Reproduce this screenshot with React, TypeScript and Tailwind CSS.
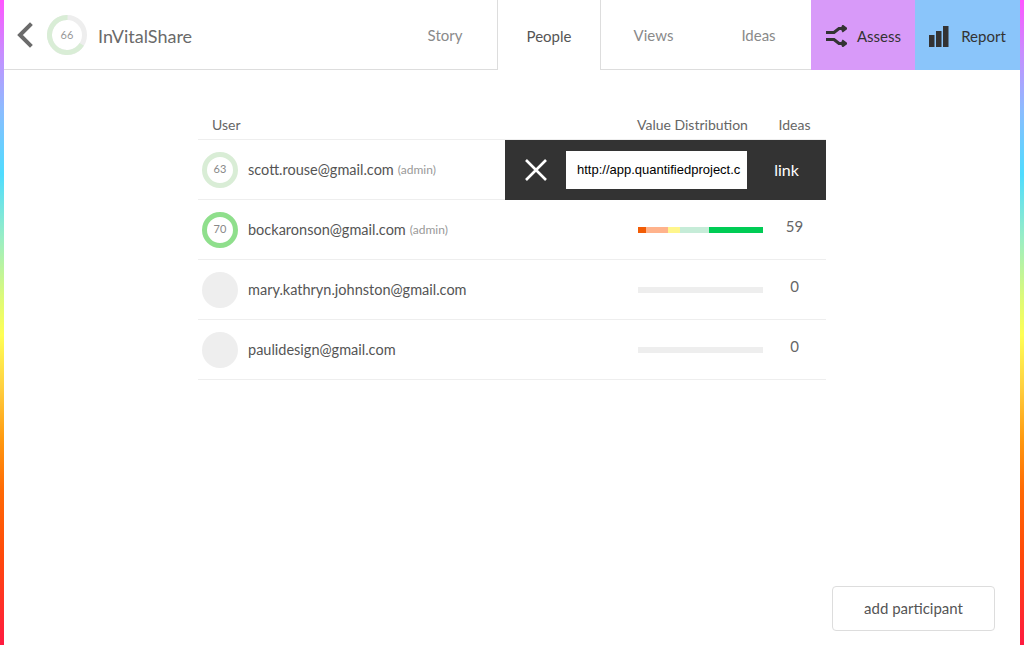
import React from "react";

const FONT = "font-['Lato','Noto_Sans',sans-serif]";
const STRIP = "w-[4px] shrink-0 bg-[linear-gradient(to_bottom,#ff55ff_0%,#c98cff_8%,#8cbcff_17%,#4fdcff_27%,#9aeec4_37%,#dcfa7a_46%,#ffff55_52%,#ffd040_60%,#ff9a10_68%,#ff6a05_76%,#ff4a0a_86%,#ff1a40_100%)]";

interface Person {
  email: string;
  admin: boolean;
  score?: number;
  ring?: string;
  ideas: number;
  dist?: { color: string; w: number }[];
}

const PEOPLE: Person[] = [
  { email: "scott.rouse@gmail.com", admin: true, score: 63, ring: "#d9edd6", ideas: 0 },
  {
    email: "bockaronson@gmail.com", admin: true, score: 70, ring: "#8fdf8c", ideas: 59,
    dist: [
      { color: "#f25c05", w: 8 },
      { color: "#ffb38c", w: 22 },
      { color: "#fff68c", w: 12 },
      { color: "#c6ecd8", w: 29 },
      { color: "#00cc55", w: 54 },
    ],
  },
  { email: "mary.kathryn.johnston@gmail.com", admin: false, ideas: 0 },
  { email: "paulidesign@gmail.com", admin: false, ideas: 0 },
];

function Donut({ value }: { value: number }) {
  const r = 17.5;
  const c = 2 * Math.PI * r;
  // green arc ends at 12 o'clock, grey gap sits in the upper right
  const start = -90 + (360 * (100 - value)) / 100;
  return (
    <svg width="40" height="40" viewBox="0 0 40 40">
      <circle cx="20" cy="20" r={r} fill="none" stroke="#eeeeee" strokeWidth="5" />
      <circle
        cx="20" cy="20" r={r} fill="none" stroke="#d9edd6" strokeWidth="5"
        strokeDasharray={`${(c * value) / 100} ${c}`}
        transform={`rotate(${start} 20 20)`}
      />
      <text x="20" y="24" textAnchor="middle" fontSize="11" fill="#999" fontFamily="Lato, sans-serif">{value}</text>
    </svg>
  );
}

function Avatar({ p }: { p: Person }) {
  if (p.score === undefined) return <div className="w-[36px] h-[36px] rounded-full bg-[#eeeeee]" />;
  return (
    <div
      className="w-[36px] h-[36px] rounded-full border-[5px] flex items-center justify-center text-[11px] text-[#888]"
      style={{ borderColor: p.ring }}
    >
      {p.score}
    </div>
  );
}

function AssessIcon() {
  return (
    <svg width="22" height="22" viewBox="0 0 22 22" fill="none" stroke="#333" strokeWidth="3.2">
      <path d="M1 7.5 H9 L14 3.5 H19" />
      <path d="M1 14.5 H9 L14 18.5 H19" />
      <path d="M17 0.5 L21 3.5 L17 6.5" strokeWidth="2.4" fill="#333" />
      <path d="M17 15.5 L21 18.5 L17 21.5" strokeWidth="2.4" fill="#333" />
    </svg>
  );
}

function ReportIcon() {
  return (
    <svg width="20" height="22" viewBox="0 0 20 22" fill="#333">
      <rect x="0" y="10" width="5.5" height="12" />
      <rect x="7" y="6" width="5.5" height="16" />
      <rect x="14" y="1" width="5.5" height="21" />
    </svg>
  );
}

export default function App() {
  const tab = "h-[70px] w-[104px] flex items-center justify-center pt-[2px] text-[15px]";
  return (
    <div className={`${FONT} flex h-[645px] w-[1024px] bg-white text-[#666]`}>
      <div className={STRIP} />
      <div className="flex-1 flex flex-col min-w-0">
        {/* Header */}
        <div className="flex h-[70px]">
          <div className="flex-1 flex items-center border-b border-[#dddddd] pl-[11px] pt-[1px]">
            <svg width="20" height="26" viewBox="0 0 20 26" fill="none" stroke="#6b6b6b" strokeWidth="4" strokeLinecap="square">
              <path d="M15 3 L5 13 L15 23" />
            </svg>
            <div className="ml-[12px]"><Donut value={66} /></div>
            <span className="ml-[11px] pt-[2px] text-[18px] text-[#6a6a6a]">InVitalShare</span>
          </div>
          <div className={`${tab} border-b border-[#dddddd] text-[#8a8a8a]`}>Story</div>
          <div className={`${tab} w-[103px] border-x border-[#dddddd] text-[#555]`}>People</div>
          <div className={`${tab} w-[105px] border-b border-[#dddddd] text-[#8a8a8a]`}>Views</div>
          <div className={`${tab} w-[105px] border-b border-[#dddddd] text-[#8a8a8a]`}>Ideas</div>
          <div className={`${tab} bg-[#d89af9] text-[#333] gap-[10px]`}><AssessIcon />Assess</div>
          <div className={`${tab} w-[105px] bg-[#8ac5fa] text-[#333] gap-[12px]`}><ReportIcon />Report</div>
        </div>

        {/* Table */}
        <div className="flex-1">
          <div className="w-[628px] mx-auto mt-[40px] text-[14.5px]">
            <div className="flex items-center h-[30px] border-b border-[#eeeeee] text-[14px] text-[#666]">
              <div className="flex-1 pl-[14px]">User</div>
              <div className="w-[126px] -ml-px whitespace-nowrap">Value Distribution</div>
              <div className="w-[63px] text-center">Ideas</div>
            </div>
            {PEOPLE.map((p, i) => (
              <div key={p.email} className="relative flex items-center h-[60px] border-b border-[#eeeeee]">
                <div className="flex-1 flex items-center pl-[4px] gap-[10px]">
                  <Avatar p={p} />
                  <span className="text-[#555]">{p.email}</span>
                  {p.admin && <span className="-ml-[6px] text-[12px] text-[#999]">(admin)</span>}
                </div>
                <div className="w-[125px]">
                  {p.dist ? (
                    <div className="flex h-[6px]">
                      {p.dist.map((d, k) => (
                        <div key={k} style={{ width: d.w, backgroundColor: d.color }} />
                      ))}
                    </div>
                  ) : i > 0 ? (
                    <div className="h-[6px] bg-[#eeeeee]" />
                  ) : null}
                </div>
                <div className="w-[63px] text-center text-[15px] text-[#666] -mt-[6px]">{i > 0 ? p.ideas : ""}</div>

                {i === 0 && (
                  <div className="absolute right-0 top-0 -bottom-px w-[321px] bg-[#333333] flex items-center">
                    <div className="w-[61px] flex items-center justify-center">
                      <svg width="24" height="24" viewBox="0 0 24 24" stroke="#fff" strokeWidth="2.6">
                        <path d="M2 2 L22 22 M22 2 L2 22" />
                      </svg>
                    </div>
                    <div className="w-[181px] h-[38px] bg-white flex items-center pl-[11px] overflow-hidden whitespace-nowrap font-['Liberation_Sans',Arial,sans-serif] text-[13px] text-black">
                      http://app.quantifiedproject.c
                    </div>
                    <div className="flex-1 text-center text-white text-[16px]">link</div>
                  </div>
                )}
              </div>
            ))}
          </div>
        </div>

        {/* Footer */}
        <div className="flex justify-end pr-[25px] pb-[14px]">
          <button className="w-[163px] h-[45px] border border-[#dddddd] rounded-[4px] text-[15px] text-[#555] bg-white">
            add participant
          </button>
        </div>
      </div>
      <div className={STRIP} />
    </div>
  );
}
